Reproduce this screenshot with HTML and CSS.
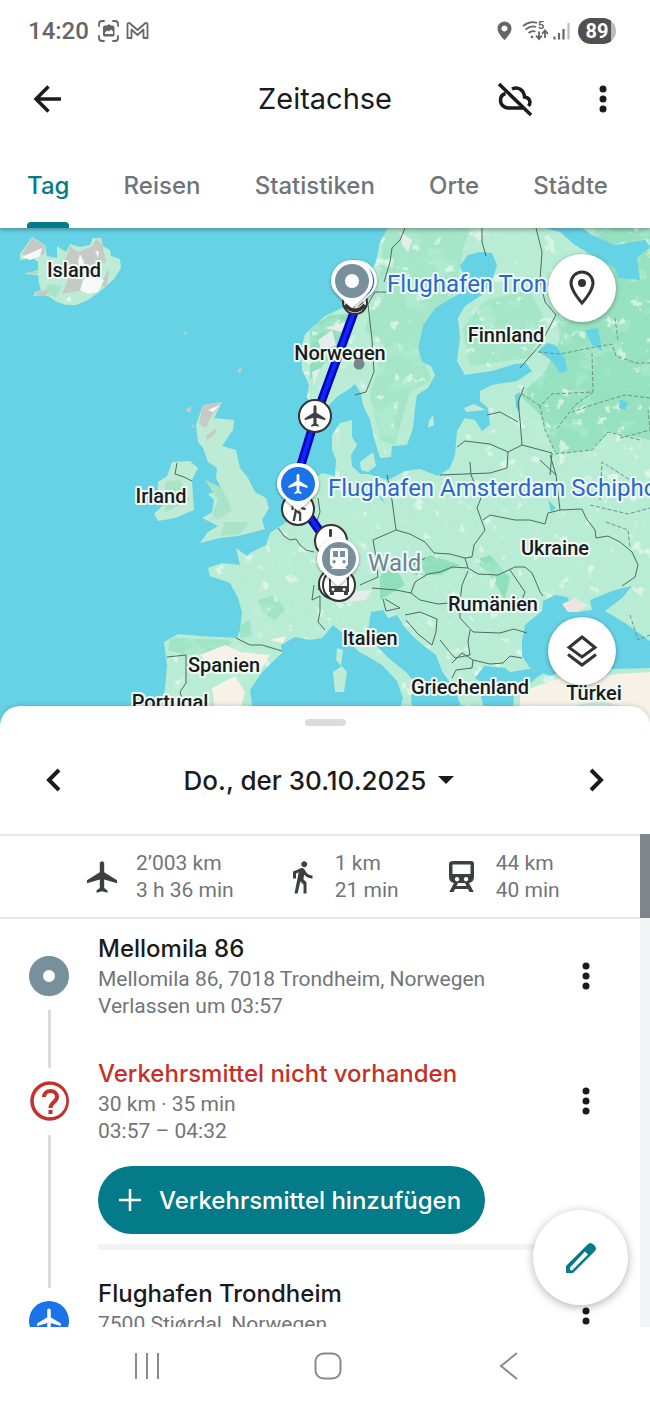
FILE: index.html
```
<!DOCTYPE html>
<html lang="de">
<head>
    <meta charset="UTF-8">
    <meta name="viewport" content="width=device-width, initial-scale=1.0">
    <title>Zeitachse</title>
    <link rel="stylesheet" href="styles.css">
</head>
<body>
    <!-- shared icons -->
    <svg class="sprite" aria-hidden="true">
        <symbol id="i-plane" viewBox="0 0 24 24">
            <path d="M21.500 16v-2L13.400 9V3.500C13.400 2.600 12.800 2 12 2s-1.400.6-1.400 1.500V9L2.500 14v2l8.100-2.500V19l-2.100 1.500V22l3.500-1 3.500 1v-1.500L13.400 19v-5.500z"/>
        </symbol>
        <symbol id="i-walk" viewBox="0 0 24 24">
            <path d="M13.500 5.500c1.100 0 2-.9 2-2s-.9-2-2-2-2 .9-2 2 .9 2 2 2zM9.800 8.900L7 23h2.100l1.800-8 2.100 2v6h2v-7.500l-2.100-2 .6-3C14.800 12 16.800 13 19 13v-2c-1.900 0-3.500-1-4.300-2.400l-1-1.600c-.4-.6-1-1-1.700-1-.3 0-.5.1-.8.1L6 8.300V13h2V9.600z"/>
        </symbol>
        <symbol id="i-train" viewBox="0 0 26 32">
            <path fill-rule="evenodd" d="M4 0h18q3 0 3 3v13q0 5-5 6l4.500 8.500V31h-4l-1.500-3H6l-1.500 3h-4v-.5L5 22q-5-1-5-6V3q0-3 4-3zM3.500 3.500V13h18V3.500zM8 16a2.200 2.200 0 1 0 .1 0zM17 16a2.200 2.200 0 1 0 .1 0zM9 22l-1.500 3h10L16 22z"/>
        </symbol>
        <symbol id="i-dots" viewBox="0 0 8 28">
            <circle cx="4" cy="4" r="3.500"/><circle cx="4" cy="14" r="3.500"/><circle cx="4" cy="24" r="3.500"/>
        </symbol>
    </svg>

    <header class="top">
        <div class="status">
            <span class="clock">14:20</span>
            <svg class="status-left" viewBox="0 0 52 22">
                <g fill="none" stroke="#666" stroke-width="1.800" stroke-linecap="round">
                    <path d="M1 6V4q0-3 3-3h2M15 1h2q3 0 3 3v2M20 16v2q0 3-3 3h-2M6 21H4q-3 0-3-3v-2"/>
                    <path stroke-linejoin="round" d="M29.500 18V4.500q0-2 2-1.500l8 7 8-7q2-.5 2 1.500V18h-4V9.500L39.500 15l-6-5.500V18z"/>
                </g>
                <path fill="#666" fill-rule="evenodd" d="M7 5.500H9l1-1h2l1 1h1.500Q16.500 5.500 16.500 7v8q0 1.500-1.500 1.500H6.500Q5 16.500 5 15V7q0-1.500 2-1.500zM7 14h8v-2.500l-2-2-2 2-1.500-1-2.500 2z"/>
            </svg>
            <span class="spacer"></span>
            <svg class="status-right" viewBox="0 0 75 22">
                <path fill="#666" fill-rule="evenodd" d="M7.500 1.500a7 7 0 0 0-7 7c0 5 7 11.500 7 11.500s7-6.500 7-11.500a7 7 0 0 0-7-7zm0 4a3 3 0 1 1-.1 0z"/>
                <g fill="none" stroke="#666" stroke-width="1.800">
                    <path d="M26 6q7-5.500 14-3M28.500 9.500q6-4.500 10.500-2.500M31.500 13q3-2.500 7-1.500"/>
                    <path d="M42 11.500v7m-3-3l3 3.500 3-3.500M48 18v-7m-3 3l3-3.500 3 3.500"/>
                    <path stroke-width="2.200" d="M57.500 16.500v3M62 13v6.500M66.500 9v10.500"/>
                    <path stroke="#bbb" stroke-width="2.200" d="M71.500 3v16.500"/>
                </g>
                <circle cx="35" cy="17" r="1.300" fill="#666"/>
                <text class="wifi-band" x="41" y="9">5</text>
            </svg>
            <span class="battery">89</span>
        </div>

        <div class="appbar">
            <button class="icon-btn" aria-label="Zurück">
                <svg width="28" height="28" viewBox="0 0 28 28" fill="none" stroke="#1b1b1b" stroke-width="3.500"><path d="M28 14H3M15.500 1.500L3 14l12.500 12.500"/></svg>
            </button>
            <h1>Zeitachse</h1>
            <button class="icon-btn" aria-label="Sicherung aus">
                <svg width="40" height="40" viewBox="0 0 40 40" fill="none" stroke="#1b1b1b" stroke-width="3.500"><path d="M4 5l32 31M10.500 14.500C6 16 5.500 19 5.500 21c0 5 4 8 8 8H28M17 10c6-3 12 1 12.500 8 5 .5 7 5 4 9"/></svg>
            </button>
            <button class="icon-btn" aria-label="Mehr"><svg class="dots"><use href="#i-dots"/></svg></button>
        </div>

        <nav class="tabs">
            <a href="#" class="active">Tag</a>
            <a href="#">Reisen</a>
            <a href="#">Statistiken</a>
            <a href="#">Orte</a>
            <a href="#">Städte</a>
        </nav>
    </header>

    <section class="map">
        <svg class="map-canvas" viewBox="0 228 650 502" preserveAspectRatio="xMidYMin slice">
            <defs>
                <filter id="patches" x="0" y="0" width="100%" height="100%">
                    <feTurbulence type="fractalNoise" baseFrequency="0.040 0.050" numOctaves="4" seed="7"/>
                    <feColorMatrix values="0 0 0 0 0.52  0 0 0 0 0.87  0 0 0 0 0.72  10 0 0 0 -5.600"/>
                </filter>
                <filter id="specks" x="0" y="0" width="100%" height="100%">
                    <feTurbulence type="fractalNoise" baseFrequency="0.070" numOctaves="5" seed="12"/>
                    <feColorMatrix values="0 0 0 0 0.82  0 0 0 0 0.94  0 0 0 0 0.86  0 12 0 0 -8"/>
                </filter>
                <filter id="shade" x="-30%" y="-30%" width="160%" height="160%">
                    <feDropShadow dx="0" dy="1" stdDeviation="1.500" flood-opacity="0.45"/>
                </filter>
                <path id="mainland" d="M388 228L380 242 376 262 365 282 350 304 340 309 325 316 305 334 301 350 302 370 309 385 307 397 318 414 328 406 338 396 348 390 355 384 361 394 363 405 370 420 373 434 377 448 380 458 391 457 392 446 407 445 413 428 415 408 417 395 428 388 435 375 431 366 422 362 418 348 423 325 435 308 448 300 464 291 468 284 460 266 468 255 480 252 492 253 497 265 492 281 482 295 465 306 458 318 460 338 457 361 465 375 492 371 515 364 526 363 532 371 517 381 492 385 480 391 480 401 488 408 490 425 482 431 475 420 465 418 457 431 455 455 450 468 438 476 420 469 405 471 388 480 368 474 360 474 352 466 351 455 357 445 352 437 352 420 340 423 332 435 332 450 336 460 335 476 322 473 310 482 302 498 295 512 285 523 270 533 266 545 250 553 247 556 236 548 240 565 222 563 208 568 210 576 230 583 238 598 242 612 240 630 237 638 200 636 178 634 164 642 167 665 165 690 160 706 158 735H238L252 704 250 690 262 672 282 653 281 645 295 637 310 640 322 638 333 625 345 635 358 651 382 665 397 681 403 698 399 712 412 712 411 695 418 686 406 672 392 661 378 648 368 631 371 612 383 610 388 618 397 615 405 628 418 641 436 655 442 671 452 685 458 698 470 732H498L485 712 493 690 475 678 484 666 505 668 512 674 525 671 535 680 514 692 512 735H650V228z"/>
                <clipPath id="on-land"><use href="#mainland"/></clipPath>
            </defs>

            <rect y="228" width="650" height="502" fill="#65d2e6"/>
            <use href="#mainland" fill="#b9ecd5"/>

            <!-- vegetation -->
            <g clip-path="url(#on-land)">
                <path fill="#95e1c0" d="M596 228L650 228V440L610 432 590 450 556 454 540 415 520 395 545 372 560 340 555 300 575 280z"/>
                <path fill="#a5e6c8" d="M385 228L470 228 463 250 455 300 430 315 420 352 432 380 410 392 395 445 380 440 370 395 384 345 365 330 378 285z"/>
                <path fill="#a5e6c8" d="M485 300L530 290 545 320 530 358 470 366 462 330z"/>
                <path fill="#8fdfbd" d="M310 328L330 315 350 314 345 340 310 380zM475 560L490 555 510 577 505 600 490 575zM380 575L395 565 405 585 380 600zM410 565L430 555 460 565 440 575 415 575z"/>
                <path fill="#a0e4c6" d="M258 600L275 595 285 610 275 620 262 612zM170 638L235 640 220 652 185 655 168 650zM240 625L250 620 252 636 240 638z"/>
                <rect y="228" width="650" height="502" filter="url(#patches)" opacity="0.350"/>
                <rect y="228" width="650" height="502" filter="url(#specks)" opacity="0.700"/>
                <path fill="#e5ecea" d="M318 340L332 330 336 345 322 352zM312 372L320 368 314 385zM325 328L345 322 342 332zM400 232L412 240 408 252 402 245zM345 592L372 590 366 600 350 602z"/>
                <path fill="#f7f1e8" d="M200 655L225 645 240 652 270 655 262 668 235 662 210 665zM212 688L235 676 245 692 238 718 215 710zM270 640L286 636 283 643zM520 692L560 678 650 672V735H520z"/>
                <path fill="#c9edd2" d="M555 710L600 700 640 712 625 730H545zM575 672L600 668 590 680z"/>
            </g>

            <!-- seas and lakes -->
            <g fill="#65d2e6">
                <path d="M545 228L560 232 575 245 592 255 615 268 618 278 640 280 637 258 650 247 645 240 615 245 592 235 582 228z"/>
                <path d="M538 351L547 343 555 345 565 358 567 371 560 373 552 361zM585 330L598 328 602 351 592 345zM515 395L520 392 520 412 516 408zM620 400L628 402 626 410 619 408z"/>
                <path d="M522 641L525 625 542 611 543 601 555 595 567 597 577 612 592 610 590 600 615 590 632 586 622 598 605 611 625 623 650 641V668L610 669 580 666 550 676 530 668 522 656z"/>
                <path d="M505 673L540 667 545 672 530 682 512 684zM478 685L497 690 512 712 502 735 490 730zM376 488L386 505 378 496zM548 500L556 508 551 512z"/>
            </g>
            <path fill="#eee5df" d="M562 604L575 598 586 606 578 612 568 612z"/>

            <!-- islands -->
            <g fill="#bdebd5">
                <path d="M20 254L32 237 45 245 47 256 57 258 57 246 66 252 70 244 80 247 90 245 93 238 101 238 103 246 110 250 111 256 120 259 121 268 114 279 103 289 88 300 76 305 66 305 57 302 48 296 34 296 35 292 41 290 39 283 38 275 24 274 38 270 38 262 33 258 20 260z"/>
                <path d="M203 405L222 402 214 418 234 420 233 430 222 446 236 450 240 468 248 478 255 492 266 498 269 508 262 520 265 529 250 533 238 536 220 538 200 543 208 532 218 526 202 518 212 512 214 500 208 494 222 490 216 478 217 468 208 462 203 448 198 442 196 425z"/>
                <path d="M172 462L190 461 198 468 192 480 194 510 175 518 158 521 154 514 163 505 157 498 158 482 167 476z"/>
                <path d="M337 648L343 650 341 666 336 660zM333 672L342 666 347 672 344 692 335 692zM360 462L373 452 376 466 368 472 361 470zM429 421L433 415 434 425 428 428zM464 408L474 404 486 410 466 412zM377 712L403 708 395 730 380 722z"/>
            </g>
            <path fill="#a9e3c8" d="M205 480L222 488 232 510 218 520 212 515 218 500zM225 522L250 522 240 534 220 536zM60 262L70 256 66 276zM48 284L62 286 56 298 44 292zM165 482L180 480 190 500 165 512z"/>
            <g fill="#c6cac6">
                <path d="M22 254L32 238 44 245 45 254 32 257zM24 273L38 271 37 274zM36 292L48 290 46 296 36 296zM66 258L70 246 78 252 93 246 96 238 102 244 106 262 92 268 84 290 62 294 68 280 64 272zM100 284L110 268 106 288z"/>
                <path d="M203 405L222 402 210 418 206 428 199 424zM206 436L217 428 215 434 207 440zM190 422L195 427 193 428zM183 332L188 333 185 335zM237 370L242 367 240 374zM185 410L192 406 190 413z"/>
            </g>
            <path fill="#f8f8f6" d="M80 290L83 280 92 274 104 280 98 292 88 294zM66 300L70 296 71 302zM80 254L84 262 82 272 78 262zM95 250L99 252 98 258zM22 257L42 248 40 256 30 260zM208 410L220 405 213 412z"/>

            <!-- borders -->
            <g class="border">
                <path d="M405 228L400 240 392 248 390 262 384 282M386 292H375L368 304 372 340 374 372 366 392 355 395M482 228V242L486 256M536 228L542 252 540 280 545 302 556 315 540 345 520 368M524 387L518 402 520 420 522 445 552 453 550 475M457 447L465 441 490 444 508 452 522 445M487 415L500 412 518 422M508 452L507 468 490 473 440 475"/>
                <path d="M387 475L392 500 396 530 373 540 376 557 378 577 360 585M396 530L410 534 425 542 434 553 450 554 465 558 472 557 474 545 485 530 477 508 481 498 471 475 470 462M465 558L468 568 452 567 440 572 428 574 415 582 411 593 396 590 372 588M425 558L410 566M483 520L490 515 515 520 530 520 545 524 548 513 560 510 582 509 586 518 595 530 596 538 608 536 620 542 632 552 638 565 635 577 622 586M468 568L478 574 498 575 515 567 525 567 532 573 536 582 540 592 543 596M510 570L525 592 522 600M468 571L462 585 460 602"/>
                <path d="M550 455L556 475 560 510M540 460L556 475M411 593L420 600 438 604 460 602M385 599L400 608 386 611 383 599M405 615L420 612 437 619 436 632 432 645 418 634 406 620M460 602V618L473 632 500 633 514 629 527 633M470 630L468 642 470 655 455 658 448 650 440 640M452 663L462 653 473 660 472 668 456 670 452 678M473 660L490 664 503 663 510 656 522 658"/>
                <path d="M278 528L284 536 290 540 296 539 300 545 306 550 314 552M314 585L312 600 320 596 320 612 318 622 325 630M236 638L250 645 262 645 282 651M167 657L186 655 186 683 180 692 184 705M177 463L175 474 184 477 192 481M318 498L320 512 316 524M325 566L318 590"/>
            </g>
            <g class="border dashed">
                <path d="M538 352L560 354 590 348 612 344 616 356 636 363H650M592 353L593 392 552 394 540 406 545 430 555 452M593 392L575 405 556 430M522 394L540 406M650 398L625 395 598 403 572 412M620 438L650 430 648 410M555 454L592 450 608 432 640 440M615 318L618 340M600 500L602 462 630 480M590 505L628 514 650 508M606 522L628 530 630 548M630 615L638 640 650 635"/>
            </g>

            <!-- travelled route -->
            <g fill="none" stroke-linejoin="round">
                <path stroke="#0000b4" stroke-width="9" d="M357 304L316 416 297 478M306 512L342 562"/>
                <path stroke="#0a28ff" stroke-width="4" d="M357 304L316 416 297 478M306 512L342 562"/>
            </g>

            <!-- labels -->
            <g class="country">
                <text x="74" y="277">Island</text>
                <text x="340" y="360">Norwegen</text>
                <text x="506" y="342">Finnland</text>
                <text x="161" y="503">Irland</text>
                <text x="555" y="555">Ukraine</text>
                <text x="493" y="611">Rumänien</text>
                <text x="370" y="645">Italien</text>
                <text x="224" y="672">Spanien</text>
                <text x="470" y="694">Griechenland</text>
                <text x="594" y="700">Türkei</text>
                <text x="170" y="709">Portugal</text>
            </g>
            <circle cx="359" cy="364" r="5.500" fill="#78858f"/>

            <g class="badge">
                <circle cx="355" cy="302" r="12"/>
                <path fill="none" stroke-width="4" d="M345 305q10 11 20 0M348 301q7 7 14 0"/>
                <circle cx="315" cy="416" r="16"/>
                <circle cx="298" cy="509" r="16"/>
                <circle cx="331" cy="541" r="16"/>
                <circle cx="334" cy="584" r="15"/>
                <circle cx="339" cy="585" r="16"/>
            </g>
            <g fill="#3c4043">
                <use href="#i-plane" x="302" y="403" width="26" height="26"/>
                <use href="#i-walk" x="285" y="496" width="26" height="26"/>
                <rect x="329" y="529" width="3" height="8" rx="1"/>
                <path fill-rule="evenodd" d="M329 576h20v16h-1v3h-4v-3h-10v3h-4v-3h-1zM331 579v7h16v-7zM333 588a1.500 1.500 0 1 0 .1 0zM344 588a1.500 1.500 0 1 0 .1 0z"/>
            </g>

            <path id="pin" class="pin" d="M356 260a21 21 0 0 1 21 21c0 11-10 16-21 27-11-11-21-16-21-27a21 21 0 0 1 21-21z"/>
            <circle cx="357" cy="281" r="17" fill="#1a5fd0"/>
            <use href="#pin" x="-4"/>
            <circle cx="352" cy="281" r="17" fill="#78909c"/>
            <circle cx="352" cy="281" r="7" fill="#fff"/>

            <use href="#pin" x="-58" y="203"/>
            <circle cx="298" cy="484" r="17" fill="#1a73e8"/>
            <use href="#i-plane" x="286" y="472" width="24" height="24" fill="#fff"/>

            <use href="#pin" x="-18" y="278"/>
            <circle cx="339" cy="559" r="17" fill="#78909c"/>
            <path fill="#fff" fill-rule="evenodd" d="M333 548h12q3 0 3 3v12q0 3-3 4l2 2h-16l2-2q-3-1-3-4v-12q0-3 3-3zM333 551v6h5v-6zM340 551v6h5v-6zM334 560a1.700 1.700 0 1 0 .1 0zM344 560a1.700 1.700 0 1 0 .1 0z"/>

            <g class="place">
                <text x="387" y="292">Flughafen Trondheim</text>
                <text x="328" y="496">Flughafen Amsterdam Schiphol</text>
                <text class="muted" x="368" y="571">Wald</text>
            </g>
        </svg>

        <button class="round pin-btn" aria-label="Ort">
            <svg width="26" height="36" viewBox="0 0 26 36"><path fill="none" stroke="#333" stroke-width="3" d="M13 2A11 11 0 0 0 2 13c0 8 11 20 11 20s11-12 11-20A11 11 0 0 0 13 2z"/><circle cx="13" cy="13" r="4" fill="#333"/></svg>
        </button>
        <button class="round layer-btn" aria-label="Ebenen">
            <svg width="32" height="34" viewBox="0 0 32 34" fill="none" stroke="#333" stroke-width="3"><path d="M16 3L29 13.500 16 23 3 13.500zM2 20.500L16 31l14-10.500"/></svg>
        </button>
    </section>

    <main class="sheet">
        <div class="grip"></div>
        <div class="date-row">
            <button class="icon-btn" aria-label="Vorheriger Tag"><svg width="16" height="24" viewBox="0 0 16 24"><path d="M13 2L3 12l10 10"/></svg></button>
            <button class="date">Do., der 30.10.2025 <span class="caret"></span></button>
            <button class="icon-btn" aria-label="Nächster Tag"><svg width="16" height="24" viewBox="0 0 16 24"><path d="M3 2l10 10L3 22"/></svg></button>
        </div>

        <div class="scroller">
            <div class="content">
                <div class="summary">
                    <div class="stat"><svg width="38" height="38"><use href="#i-plane"/></svg><p>2’003 km<br>3 h 36 min</p></div>
                    <div class="stat"><svg width="36" height="36"><use href="#i-walk"/></svg><p>1 km<br>21 min</p></div>
                    <div class="stat train"><svg width="26" height="32"><use href="#i-train"/></svg><p>44 km<br>40 min</p></div>
                </div>

                <ol class="timeline">
                    <li class="entry">
                        <div class="rail"><span class="node place-node"></span></div>
                        <div class="info">
                            <h2>Mellomila 86</h2>
                            <p>Mellomila 86, 7018 Trondheim, Norwegen<br>Verlassen um 03:57</p>
                        </div>
                        <button class="icon-btn more" aria-label="Mehr"><svg class="dots"><use href="#i-dots"/></svg></button>
                    </li>
                    <li class="entry missing">
                        <div class="rail">
                            <svg class="node" viewBox="0 0 40 40" fill="none" stroke="#c5302b" stroke-width="3.500"><circle cx="21" cy="20" r="18"/><path stroke-width="4" d="M15 16c0-8 13-8 13 0 0 5-6.500 5-6.500 11M21.500 29v4"/></svg>
                        </div>
                        <div class="info">
                            <h2>Verkehrsmittel nicht vorhanden</h2>
                            <p>30 km · 35 min<br>03:57 – 04:32</p>
                            <button class="add"><svg width="22" height="22" viewBox="0 0 22 22" stroke="#fff" stroke-width="2.500"><path d="M11 0v22M0 11h22"/></svg>Verkehrsmittel hinzufügen</button>
                        </div>
                        <button class="icon-btn more" aria-label="Mehr"><svg class="dots"><use href="#i-dots"/></svg></button>
                    </li>
                    <li class="entry">
                        <div class="rail"><span class="node flight-node"><svg width="30" height="30"><use href="#i-plane"/></svg></span></div>
                        <div class="info">
                            <h2>Flughafen Trondheim</h2>
                            <p>7500 Stjørdal, Norwegen</p>
                        </div>
                        <button class="icon-btn more" aria-label="Mehr"><svg class="dots"><use href="#i-dots"/></svg></button>
                    </li>
                </ol>
            </div>
            <div class="scrollbar"><div class="thumb"></div></div>
        </div>

        <button class="fab" aria-label="Bearbeiten">
            <svg width="32" height="32" viewBox="0 0 32 32"><path fill="#047b88" fill-rule="evenodd" d="M1 24L22.500 2.500q3-3 6 0l1 1q3 3 0 6L8 31H1zM5 25.500V28l2 .500L23 12.500 20 9.500z"/></svg>
        </button>
    </main>

    <footer class="navbar">
        <button class="icon-btn" aria-label="Letzte Apps"><svg width="28" height="28" viewBox="0 0 28 28"><path d="M3 1v26M14 1v26M25 1v26"/></svg></button>
        <button class="icon-btn" aria-label="Startbildschirm"><svg width="28" height="28" viewBox="0 0 28 28"><rect x="1.500" y="1.500" width="25" height="25" rx="8"/></svg></button>
        <button class="icon-btn" aria-label="Zurück"><svg width="28" height="28" viewBox="0 0 28 28"><path d="M22 1L6 14l16 13"/></svg></button>
    </footer>
</body>
</html>
```
FILE: styles.css
```
:root {
    --teal: #047b88;
    --text: #1b1b1b;
    --muted: #70757a;
    --line: #e8e8ea;
    --red: #c5302b;
    --heading-font: Inter, Roboto, sans-serif;
}

* {
    box-sizing: border-box;
}

body {
    display: flex;
    flex-direction: column;
    height: 100vh;
    margin: 0;
    overflow: hidden;
    background: #fff;
    color: var(--text);
    font-family: Roboto, sans-serif;
}

h1, h2, p, ol {
    margin: 0;
    padding: 0;
}

h1, h2 {
    font-family: var(--heading-font);
}

button {
    padding: 0;
    border: none;
    background: none;
    color: inherit;
    font-family: inherit;
    cursor: pointer;
}

button svg {
    display: block;
}

.sprite {
    position: absolute;
    width: 0;
    height: 0;
}

.icon-btn {
    display: flex;
    align-items: center;
    justify-content: center;
    width: 48px;
    height: 48px;
}

.dots {
    width: 8px;
    height: 28px;
    fill: var(--text);
}

/* header */
.top {
    position: relative;
    z-index: 1;
    flex: none;
    box-shadow: 0 2px 4px rgba(0, 0, 0, 0.3);
}

.status {
    display: flex;
    align-items: center;
    height: 61px;
    padding: 0 34px 0 28px;
    color: #666;
}

.clock {
    font-size: 24px;
    font-weight: 500;
}

.status-left {
    width: 52px;
    height: 22px;
    margin-left: 9px;
}

.spacer {
    flex: 1;
}

.status-right {
    width: 75px;
    height: 22px;
    margin-right: 6px;
}

.wifi-band {
    fill: #666;
    font-size: 11px;
    font-weight: 700;
}

.battery {
    width: 38px;
    border-radius: 13px;
    background: linear-gradient(90deg, #505050 88%, #bbb 88%);
    color: #fff;
    font-size: 20px;
    font-weight: 700;
    line-height: 26px;
    text-align: center;
}

.appbar {
    display: grid;
    grid-template-columns: 48px 48px 1fr 48px 48px;
    column-gap: 40px;
    align-items: center;
    height: 75px;
    padding: 0 23px;
}

.appbar h1 {
    grid-column: 3;
    font-size: 29px;
    font-weight: 400;
    text-align: center;
}

.tabs {
    display: flex;
    justify-content: space-between;
    height: 92px;
    padding: 0 42px 0 27px;
}

.tabs a {
    position: relative;
    color: var(--muted);
    font-family: var(--heading-font);
    font-size: 24px;
    font-weight: 500;
    line-height: 100px;
    text-decoration: none;
}

.tabs .active {
    color: var(--teal);
}

.tabs .active::after {
    position: absolute;
    right: 0;
    bottom: 0;
    left: 0;
    height: 6px;
    border-radius: 4px 4px 0 0;
    background: var(--teal);
    content: "";
}

/* map */
.map {
    position: relative;
    flex: none;
}

.map-canvas {
    display: block;
    width: 100%;
}

.border {
    fill: none;
    stroke: #4c6b62;
    stroke-width: 1;
    stroke-linejoin: round;
}

.dashed {
    stroke: #6f9485;
    stroke-dasharray: 4 2;
}

.map text {
    paint-order: stroke;
    stroke: #eefaf5;
    stroke-width: 4px;
    stroke-linejoin: round;
}

.country {
    fill: #1b1b1b;
    font-size: 20px;
    font-weight: 500;
    text-anchor: middle;
}

.place {
    fill: #2b66d0;
    font-size: 24px;
}

.place .muted {
    fill: #6d8490;
}

.badge {
    fill: #fff;
    stroke: #333;
    stroke-width: 2;
}

.pin {
    fill: #fff;
    filter: url(#shade);
}

.round {
    position: absolute;
    right: 34px;
    display: flex;
    align-items: center;
    justify-content: center;
    width: 68px;
    height: 68px;
    border-radius: 50%;
    background: #fff;
    box-shadow: 0 1px 4px rgba(0, 0, 0, 0.35);
}

.pin-btn {
    top: 26px;
}

.layer-btn {
    bottom: 45px;
}

/* bottom sheet */
.sheet {
    position: relative;
    display: flex;
    flex: 1;
    flex-direction: column;
    min-height: 0;
    margin-top: -24px;
    border-radius: 20px 20px 0 0;
    background: #fff;
    box-shadow: 0 -1px 4px rgba(0, 0, 0, 0.15);
}

.grip {
    flex: none;
    width: 41px;
    height: 7px;
    margin: 13px auto 0;
    border-radius: 4px;
    background: #dadce0;
}

.date-row {
    display: flex;
    flex: none;
    align-items: center;
    justify-content: space-between;
    height: 108px;
    padding: 0 30px;
}

.date-row svg {
    fill: none;
    stroke: var(--text);
    stroke-width: 4;
}

.date {
    display: flex;
    align-items: center;
    gap: 12px;
    margin-right: 12px;
    font-family: var(--heading-font);
    font-size: 26px;
    font-weight: 500;
}

.caret {
    border: 8px solid transparent;
    border-top-color: var(--text);
    border-bottom: none;
}

.scroller {
    display: flex;
    flex: 1;
    min-height: 0;
    overflow: hidden;
}

.content {
    flex: 1;
}

.scrollbar {
    width: 10px;
    background: #f1f3f4;
}

.thumb {
    height: 84px;
    background: #80868b;
}

.summary {
    display: flex;
    gap: 50px;
    align-items: center;
    height: 85px;
    padding-left: 83px;
    border-top: 2px solid var(--line);
    border-bottom: 2px solid var(--line);
}

.stat {
    display: flex;
    gap: 15px;
    align-items: center;
    fill: #3c4043;
}

.stat.train {
    gap: 21px;
}

.stat p, .info p {
    color: var(--muted);
    font-size: 21px;
    line-height: 27px;
}

.timeline {
    list-style: none;
}

.entry {
    display: flex;
    height: 125px;
    padding: 13px 30px 0 28px;
}

.entry.missing {
    height: 220px;
}

.rail {
    display: flex;
    flex: none;
    flex-direction: column;
    gap: 14px;
    align-items: center;
    width: 42px;
    margin-right: 28px;
    padding-top: 24px;
}

.rail::after {
    flex: 1;
    width: 3px;
    margin-bottom: -24px;
    background: #dadce0;
    content: "";
}

.node {
    flex: none;
    width: 40px;
    height: 40px;
    border-radius: 50%;
}

.place-node {
    border: 14px solid #78909c;
}

.flight-node {
    display: flex;
    align-items: center;
    justify-content: center;
    background: #1a73e8;
    fill: #fff;
}

.info {
    flex: 1;
}

.info h2 {
    font-size: 24px;
    font-weight: 500;
    line-height: 34px;
}

.missing h2 {
    color: var(--red);
}

.missing .info {
    display: flex;
    flex-direction: column;
    align-items: flex-start;
}

.missing .info::after {
    width: 100%;
    height: 6px;
    margin-top: 10px;
    background: #f1f3f4;
    content: "";
}

.add {
    display: flex;
    gap: 18px;
    align-items: center;
    height: 68px;
    margin-top: 21px;
    padding: 0 24px 0 21px;
    border-radius: 34px;
    background: var(--teal);
    color: #fff;
    font-family: var(--heading-font);
    font-size: 24px;
    font-weight: 500;
}

.more {
    margin-top: 20px;
}

.fab {
    position: absolute;
    right: 22px;
    bottom: 22px;
    display: flex;
    align-items: center;
    justify-content: center;
    width: 95px;
    height: 95px;
    border-radius: 50%;
    background: #fff;
    box-shadow: 0 2px 10px rgba(0, 0, 0, 0.3);
}

/* system navigation */
.navbar {
    position: relative;
    display: flex;
    flex: none;
    justify-content: space-around;
    height: 81px;
    padding: 15px 51px 0 57px;
    background: #fff;
}

.navbar svg {
    fill: none;
    stroke: #8a8a8a;
    stroke-width: 2;
}
```
